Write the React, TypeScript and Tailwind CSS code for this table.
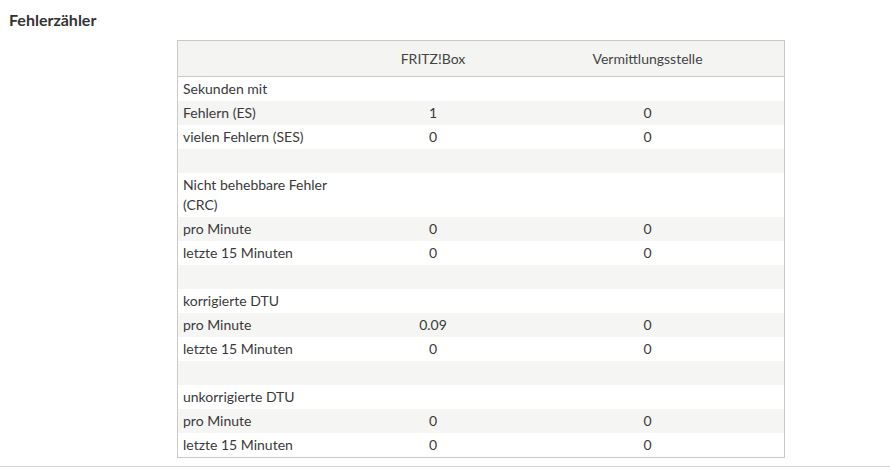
import React from 'react';

type Row =
  | { kind: 'label'; label: React.ReactNode; tall?: boolean }
  | { kind: 'value'; label: string; box: string; vst: string }
  | { kind: 'gap' };

const rows: Row[] = [
  { kind: 'label', label: 'Sekunden mit' },
  { kind: 'value', label: 'Fehlern (ES)', box: '1', vst: '0' },
  { kind: 'value', label: 'vielen Fehlern (SES)', box: '0', vst: '0' },
  { kind: 'gap' },
  {
    kind: 'label',
    label: (
      <>
        Nicht behebbare Fehler
        <br />
        (CRC)
      </>
    ),
    tall: true,
  },
  { kind: 'value', label: 'pro Minute', box: '0', vst: '0' },
  { kind: 'value', label: 'letzte 15 Minuten', box: '0', vst: '0' },
  { kind: 'gap' },
  { kind: 'label', label: 'korrigierte DTU' },
  { kind: 'value', label: 'pro Minute', box: '0.09', vst: '0' },
  { kind: 'value', label: 'letzte 15 Minuten', box: '0', vst: '0' },
  { kind: 'gap' },
  { kind: 'label', label: 'unkorrigierte DTU' },
  { kind: 'value', label: 'pro Minute', box: '0', vst: '0' },
  { kind: 'value', label: 'letzte 15 Minuten', box: '0', vst: '0' },
];

export default function App() {
  return (
    <div
      className="w-[890px] h-[470px] bg-white text-[#3a3a3a] overflow-hidden"
      style={{ fontFamily: '"Source Sans Pro", Lato, "Liberation Sans", sans-serif' }}
    >
      <h2 className="pl-[9px] pt-[10px] text-[16px] font-bold leading-[20px] text-[#333]">
        Fehlerzähler
      </h2>

      <div className="pl-[177px] pt-[10px] pb-[8px] border-b border-[#d6d6d6]">
        <div className="w-[608px] border border-[#c9c9c7] text-[14px] leading-[20px]">
          <div className="h-[36px] flex items-center bg-[#f4f4f2] border-b border-[#c9c9c7] text-[#444]">
            <div className="w-[177px]"></div>
            <div className="w-[156px] text-center">FRITZ!Box</div>
            <div className="flex-1 text-center">Vermittlungsstelle</div>
          </div>
          {rows.map((row, i) => {
            const bg = i % 2 === 1 ? 'bg-[#f5f5f4]' : 'bg-white';
            if (row.kind === 'gap') {
              return <div key={i} className={`h-[24px] ${bg}`}></div>;
            }
            if (row.kind === 'label') {
              return (
                <div
                  key={i}
                  className={`flex items-center pl-[5px] ${row.tall ? 'h-[44px]' : 'h-[24px]'} ${bg}`}
                >
                  <div>{row.label}</div>
                </div>
              );
            }
            return (
              <div key={i} className={`h-[24px] flex items-center ${bg}`}>
                <div className="w-[177px] pl-[5px] whitespace-nowrap">{row.label}</div>
                <div className="w-[156px] text-center">{row.box}</div>
                <div className="flex-1 text-center">{row.vst}</div>
              </div>
            );
          })}
        </div>
      </div>
    </div>
  );
}
